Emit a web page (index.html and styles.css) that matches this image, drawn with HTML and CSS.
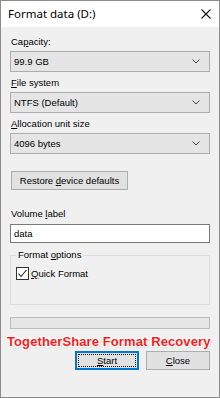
FILE: index.html
```html
<!DOCTYPE html>
<html>
<head>
<meta charset="utf-8">
<link rel="stylesheet" href="styles.css">
</head>
<body>
<div class="window">
  <div class="titlebar">
    <span class="title">Format data (D:)</span>
    <svg class="close" width="10" height="10" viewBox="0 0 10 10"><path d="M0.5 0.5L9.5 9.5M9.5 0.5L0.5 9.5" stroke="#111" stroke-width="1.1" fill="none"/></svg>
  </div>
  <div class="body">
    <div class="label">Ca<u>p</u>acity:</div>
    <div class="combo"><span>99.9 GB</span><svg class="chev" width="8" height="5" viewBox="0 0 8 5"><path d="M0.5 0.5L4 4L7.5 0.5" stroke="#444" fill="none"/></svg></div>
    <div class="label"><u>F</u>ile system</div>
    <div class="combo"><span>NTFS (Default)</span><svg class="chev" width="8" height="5" viewBox="0 0 8 5"><path d="M0.5 0.5L4 4L7.5 0.5" stroke="#444" fill="none"/></svg></div>
    <div class="label"><u>A</u>llocation unit size</div>
    <div class="combo"><span>4096 bytes</span><svg class="chev" width="8" height="5" viewBox="0 0 8 5"><path d="M0.5 0.5L4 4L7.5 0.5" stroke="#444" fill="none"/></svg></div>
    <div class="btn restore"><span>Restore <u>d</u>evice defaults</span></div>
    <div class="label vol">Volume <u>l</u>abel</div>
    <div class="textbox"><span>data</span></div>
    <div class="group">
      <div class="legend">Format <u>o</u>ptions</div>
      <div class="check-row">
        <svg class="checkbox" width="13" height="13" viewBox="0 0 13 13"><rect x="0.5" y="0.5" width="12" height="12" fill="#fff" stroke="#333"/><path d="M2.5 6.5L5 9.5L10.5 3" stroke="#222" stroke-width="1.1" fill="none"/></svg>
        <span><u>Q</u>uick Format</span>
      </div>
    </div>
    <div class="progress"></div>
    <div class="brand">TogetherShare Format Recovery</div>
    <div class="actions">
      <div class="btn start"><span class="focus"><span><u>S</u>tart</span></span></div>
      <div class="btn close-btn"><span><u>C</u>lose</span></div>
    </div>
  </div>
</div>
</body>
</html>
```
FILE: styles.css
```css
* { box-sizing: border-box; }
html, body { margin: 0; padding: 0; }
body { width: 220px; height: 398px; overflow: hidden; background: #fff; font-family: "Liberation Sans", Arial, sans-serif; font-size: 9.5px; color: #000; }
.window { width: 220px; height: 398px; border: 1px solid #8c8c8c; background: #f0f0f0; display: flex; flex-direction: column; }
.titlebar { height: 26px; background: #fff; display: flex; align-items: center; justify-content: space-between; padding: 0 8px 0 7px; flex: none; }
.title { font-family: "Noto Sans", sans-serif; font-size: 11.5px; line-height: 14px; }
.body { flex: 1; display: flex; flex-direction: column; padding: 8px 9px 0 9px; }
.label { height: 14px; line-height: 14px; margin-bottom: 2px; padding-left: 1px; }
.combo { height: 21px; background: #e5e5e5; border: 1px solid #adadad; display: flex; align-items: center; justify-content: space-between; padding: 0 9px 0 3px; margin-bottom: 4px; }
.btn { background: #e1e1e1; border: 1px solid #adadad; display: flex; align-items: center; justify-content: center; height: 19px; white-space: nowrap; }
.restore { width: 117px; margin-top: 13px; margin-left: 1px; }
.vol { margin-top: 17px; margin-bottom: 3px; }
.textbox { height: 19px; background: #fff; border: 1px solid #7a7a7a; padding: 0 3px; display: flex; align-items: center; }
.group { margin-top: 12px; height: 50px; border: 1px solid #dcdcdc; position: relative; padding: 11px 5px 0 5px; }
.legend { position: absolute; top: -8px; left: 5px; background: #f0f0f0; padding: 0 2px; line-height: 14px; }
.check-row { display: flex; align-items: center; gap: 2px; }
.progress { margin-top: 12px; height: 12px; background: #e6e6e6; border: 1px solid #bcbcbc; }
.brand { margin-top: 5px; margin-left: -3px; font-family: "Liberation Sans", Arial, sans-serif; font-weight: bold; font-size: 13px; letter-spacing: 0.1px; line-height: 16px; color: #ff1a1a; white-space: nowrap; text-shadow: 1px 1px 0 #fff, -1px -1px 0 #fff, 1px -1px 0 #fff, -1px 1px 0 #fff, 1px 1px 2px #bbb; }
.actions { display: flex; justify-content: flex-end; gap: 7px; margin-top: 1px; }
.start, .close-btn { width: 64px; height: 19px; }
.start { border: 1px solid #0078d7; box-shadow: inset 0 0 0 1px #0078d7; }
.focus { border: 1px dotted #000; width: 58px; height: 13px; display: flex; align-items: center; justify-content: center; }
```
